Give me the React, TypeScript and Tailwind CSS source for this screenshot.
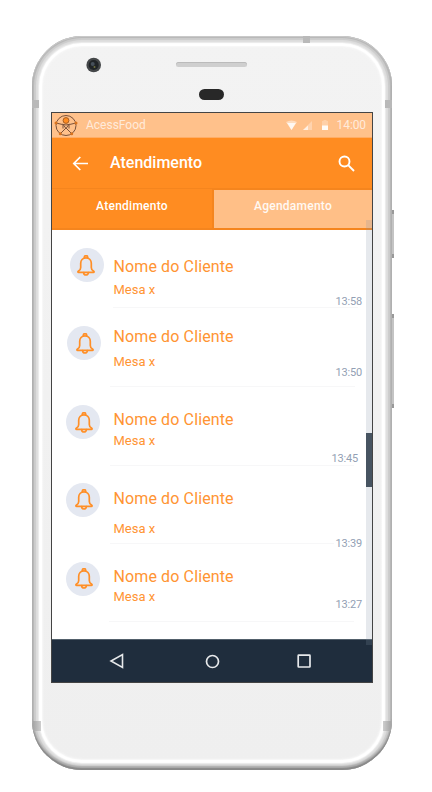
import React from "react";

type Client = {
  time: string;
  row: string;
  circle: string;
  bell: string;
  name: string;
  table: string;
  clock: string;
  line: string;
};

const clients: Client[] = [
  { time: "13:58", row: "h-[78px]", circle: "ml-[18px] mt-[18px]", bell: "-ml-[2px]", name: "mt-[27px]", table: "mt-[5px]", clock: "mt-[66px] mr-[10px]", line: "ml-[61px] mr-[14px]" },
  { time: "13:50", row: "h-[79px]", circle: "ml-[15px] mt-[18px]", bell: "ml-px", name: "mt-[19px]", table: "mt-[7px]", clock: "mt-[59px] mr-[10px]", line: "ml-[58px] mr-[17px]" },
  { time: "13:45", row: "h-[79px]", circle: "ml-[14px] mt-[18px]", bell: "ml-[2px]", name: "mt-[23px]", table: "mt-[3px]", clock: "mt-[66px] mr-[14px]", line: "ml-[58px] mr-[18px]" },
  { time: "13:39", row: "h-[78px]", circle: "ml-[14px] mt-[17px]", bell: "ml-[2px] -mt-px", name: "mt-[23px]", table: "mt-[12px]", clock: "mt-[72px] mr-[10px]", line: "ml-[58px] mr-[38px]" },
  { time: "13:27", row: "h-[78px]", circle: "ml-[14px] mt-[18px]", bell: "ml-[2px] -mt-[2px]", name: "mt-[23px]", table: "mt-[2px]", clock: "mt-[55px] mr-[10px]", line: "ml-[57px] mr-[18px]" },
];

function Bell({ className }: { className: string }) {
  return (
    <svg className={"shrink-0 " + className} width="18" height="21" viewBox="0 0 18 21" fill="none" stroke="#ff8f27" strokeWidth="1.7" strokeLinejoin="round" strokeLinecap="round">
      <path d="M7.4 2.9V1.9a1.6 1.3 0 0 1 3.2 0v1" />
      <path d="M9 2.9c-3.400 0-5.300 2.400-5.300 5.400v4.200c0 1.800-.8 2.900-2.200 3.600-.9.500-.7 1.300.1 1.300h14.800c.8 0 1-.8.1-1.300-1.400-.7-2.200-1.800-2.200-3.600V8.300c0-3-1.900-5.400-5.300-5.400z" />
      <path d="M6.700 17.700a2.300 2.300 0 0 0 4.600 0" />
    </svg>
  );
}

function Logo() {
  return (
    <svg className="shrink-0" width="24" height="24" viewBox="0 0 24 24" fill="none" stroke="#79513a" strokeWidth="1">
      <circle cx="12" cy="12.500" r="10" />
      <path d="M2 10 8.500 11.500M22 10 15.500 11.500M8 11.200q4 1.600 8 0M9.500 12 12 15.500 14.500 12M12 15 6.500 20.500M12 15 17.500 20.500M9 12v3.500M15 12v3.500" />
      <circle cx="12" cy="7.500" r="2.900" fill="#ff8c21" stroke="#a65d22" />
      <g fill="#d9731d" stroke="none">
        <circle cx="2" cy="10" r="1.500" />
        <circle cx="22" cy="10" r="1.500" />
        <circle cx="6.300" cy="20.800" r="1.500" />
        <circle cx="17.700" cy="20.800" r="1.500" />
      </g>
    </svg>
  );
}

function StatusBar() {
  return (
    <div className="flex h-[25px] shrink-0 items-center border-b border-[#ffad66] bg-[#ffc18b] pl-[2px] pr-[6px] text-white/70">
      <Logo />
      <span className="ml-[8px] text-[12px] leading-[14px]">AcessFood</span>
      <svg className="ml-auto" width="44" height="11" viewBox="0 0 44 11">
        <path d="M0 2Q5.500-1 11 2L5.500 10z" fill="#fff" fillOpacity=".45" />
        <path d="M1.200 3h8.600L5.500 10z" fill="#fff" fillOpacity=".8" />
        <path d="M17 10 26 1v9z" fill="#fff" fillOpacity=".3" />
        <path d="M17 10 22 5.500V10z" fill="#fff" fillOpacity=".65" />
        <path d="M36 1h1.500V0h3v1H42v9h-6z" fill="#fff" fillOpacity=".25" />
        <path d="M36 5.500h6V10h-6z" fill="#fff" fillOpacity=".9" />
      </svg>
      <span className="ml-[7px] text-[12px] leading-[14px] tracking-[-0.1px]">14:00</span>
    </div>
  );
}

function Header() {
  return (
    <div className="flex h-[50px] shrink-0 items-center bg-[#ff8c21] pl-[20px] pr-[17px] text-white">
      <svg width="17" height="15" viewBox="0 0 17 15" fill="none" stroke="currentColor" strokeWidth="1.700">
        <path d="M16 7.500H2M8.300 1 1.800 7.500 8.300 14" />
      </svg>
      <h1 className="ml-[21px] text-[16px] font-medium leading-5">Atendimento</h1>
      <svg className="ml-auto" width="17" height="17" viewBox="0 0 17 17" fill="none" stroke="currentColor" strokeWidth="1.900">
        <circle cx="6.500" cy="6.500" r="5" />
        <path d="m10.200 10.200 5.800 5.800" />
      </svg>
    </div>
  );
}

function Tabs() {
  return (
    <div className="flex h-[42px] shrink-0 bg-[#ff8c21] text-center text-[12px] font-medium leading-4 tracking-[0.25px] text-white">
      <div className="w-[162px] border-y border-r-2 border-b-2 border-[#f5851e] pt-[9px]">Atendimento</div>
      <div className="flex-1 border-t-2 border-b-2 border-[#f5851e] bg-[#ffbf87] pt-[8px] text-white/90">Agendamento</div>
    </div>
  );
}

function ClientRow({ client }: { client: Client }) {
  return (
    <div className={"flex flex-col " + client.row}>
      <div className="flex min-h-0 flex-1 items-start">
        <div className="w-[61.5px] shrink-0">
          <div className={"flex size-[34px] items-center justify-center rounded-full bg-[#e4e8f1] " + client.circle}>
            <Bell className={client.bell} />
          </div>
        </div>
        <div className="text-[#ff9433]">
          <p className={"text-[16px] leading-5 tracking-[0.12px] " + client.name}>Nome do Cliente</p>
          <p className={"text-[13px] leading-4 " + client.table}>Mesa x</p>
        </div>
        <span className={"ml-auto text-[11px] leading-3 tracking-[-0.2px] text-[#939fb4] " + client.clock}>{client.time}</span>
      </div>
      <div className={"h-px shrink-0 bg-[#f7f7f8] " + client.line} />
    </div>
  );
}

function NavBar() {
  return (
    <div className="flex h-[43px] shrink-0 items-center border-t border-[#52606b] bg-[#1f2d3d] pl-[57px] pr-[61px] text-[#e7e9eb]">
      <svg width="15" height="16" viewBox="0 0 15 16" fill="none" stroke="currentColor" strokeWidth="1.600">
        <path d="M13.500 1.500v13L2 8z" />
      </svg>
      <svg className="ml-[81px]" width="15" height="15" viewBox="0 0 15 15" fill="none" stroke="currentColor" strokeWidth="1.700">
        <circle cx="7.500" cy="7.500" r="6" />
      </svg>
      <svg className="ml-auto" width="14" height="14" viewBox="0 0 14 14" fill="none" stroke="currentColor" strokeWidth="1.700">
        <rect x="1.200" y="1.200" width="11.800" height="11.800" rx=".5" />
      </svg>
    </div>
  );
}

export default function App() {
  return (
    <div className="relative h-[792px] w-[432px] overflow-hidden bg-white pl-[32px] pt-[36px] font-['Roboto','Liberation_Sans',sans-serif]">
      <div className="absolute left-[390px] top-[210px] h-[48px] w-[4px] border-y-4 border-[#999] bg-[#c4c4c4]" />
      <div className="absolute left-[390px] top-[314px] h-[94px] w-[4px] border-y-4 border-[#999] bg-[#c4c4c4]" />
      <div className="relative h-[734px] w-[360px] rounded-[50px] bg-gradient-to-b from-[#f3f3f3] to-[#efefef] pl-[19px] shadow-[inset_0_1px_0_#c9c9c9,inset_0_-2px_1px_#898989,inset_0_-4px_2px_#aaa,inset_0_0_0_2px_#b9b9b9,inset_0_0_1px_4px_#cbcbcb,inset_0_0_1px_6px_#dedede,inset_0_0_1px_7px_#ebebeb,inset_0_0_1px_10px_#fff,inset_0_0_2px_11px_#f8f8f8]">
        <div className="absolute left-[271px] top-0 h-[7px] w-[7px] bg-[#b9b9b9]" />
        <div className="absolute left-0 top-[64px] h-[8px] w-[7px] bg-[#b9b9b9]" />
        <div className="absolute right-0 top-[64px] h-[8px] w-[7px] bg-[#b9b9b9]" />
        <div className="absolute left-px top-[685px] h-[10px] w-[8px] bg-gradient-to-r from-[#a5a5a5] to-[#cecece]" />
        <div className="absolute right-px top-[685px] h-[10px] w-[8px] bg-gradient-to-l from-[#a5a5a5] to-[#cecece]" />
        <div className="h-[76px]">
          <div className="flex items-start pt-[21px]">
            <svg className="ml-[35px]" width="15" height="16" viewBox="0 0 15 16">
              <circle cx="7.700" cy="8" r="7.300" fill="#444749" />
              <circle cx="7.700" cy="8" r="5" fill="#202427" />
              <circle cx="6.700" cy="7" r="2" fill="#46505a" />
              <circle cx="8.500" cy="10" r="1" fill="#6f713f" />
            </svg>
            <div className="ml-[75px] mt-[5px] h-[5px] w-[71px] rounded-full bg-[#cfcfcf] shadow-[inset_0_1px_0_#bbb]" />
          </div>
          <div className="ml-[148px] mt-[16px] h-[11px] w-[25px] rounded-full bg-[#282828]" />
        </div>
        <div className="relative flex h-[571px] w-[322px] flex-col border border-[#444] bg-white">
          <StatusBar />
          <Header />
          <Tabs />
          <div className="h-[409px] shrink-0">
            {clients.map((client) => (
              <ClientRow key={client.time} client={client} />
            ))}
          </div>
          <NavBar />
          <div className="absolute right-0 top-[107px] h-[425px] w-[6px] bg-[#8492a6]/20">
            <div className="mt-[213px] h-[54px] bg-[#475461]" />
          </div>
        </div>
      </div>
    </div>
  );
}
